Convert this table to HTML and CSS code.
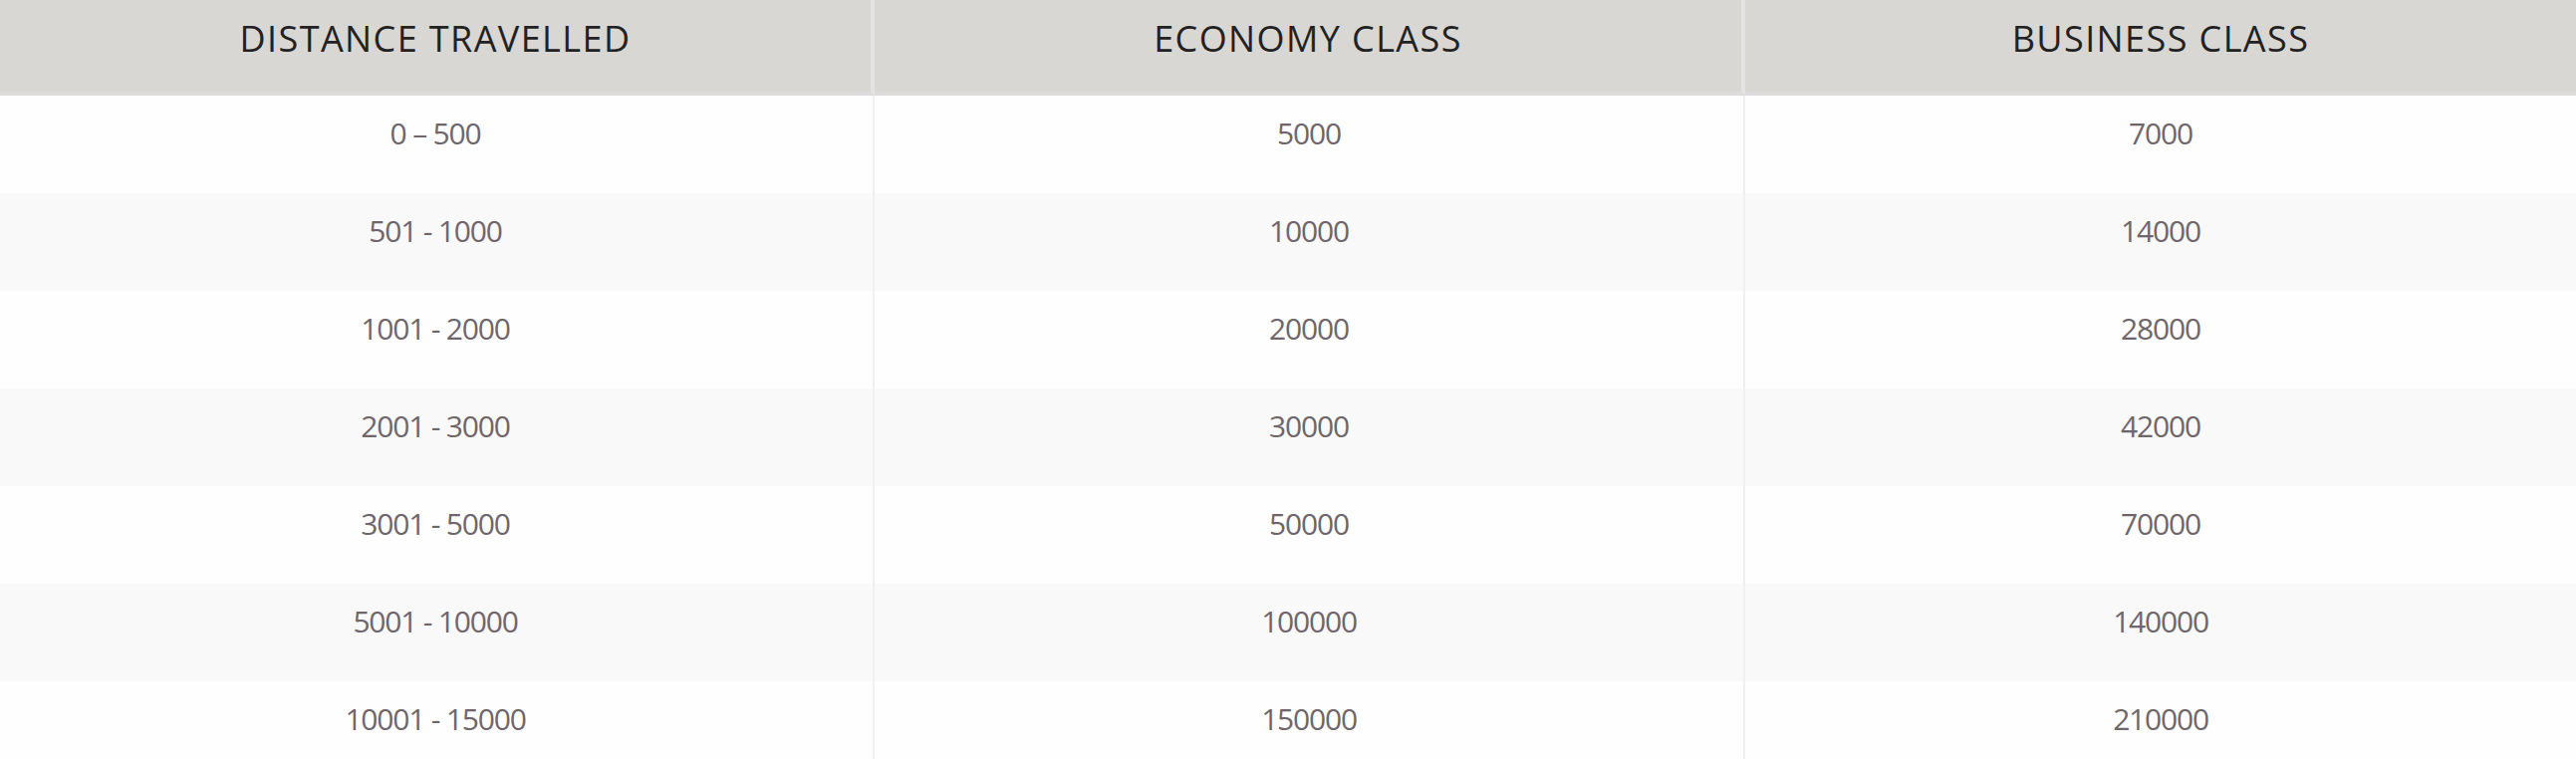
FILE: index.html
```html
<!DOCTYPE html>
<html lang="en">
<head>
<meta charset="utf-8">
<title>Miles table</title>
<link rel="stylesheet" href="styles.css">
</head>
<body>
<table class="miles">
  <colgroup>
    <col class="c1"><col class="c2"><col class="c3">
  </colgroup>
  <thead>
    <tr><th>DISTANCE TRAVELLED</th><th>ECONOMY CLASS</th><th>BUSINESS CLASS</th></tr>
  </thead>
  <tbody>
    <tr><td>0 – 500</td><td>5000</td><td>7000</td></tr>
    <tr><td>501 - 1000</td><td>10000</td><td>14000</td></tr>
    <tr><td>1001 - 2000</td><td>20000</td><td>28000</td></tr>
    <tr><td>2001 - 3000</td><td>30000</td><td>42000</td></tr>
    <tr><td>3001 - 5000</td><td>50000</td><td>70000</td></tr>
    <tr><td>5001 - 10000</td><td>100000</td><td>140000</td></tr>
    <tr><td>10001 - 15000</td><td>150000</td><td>210000</td></tr>
  </tbody>
</table>
</body>
</html>
```
FILE: styles.css
```css
html, body {
  margin: 0;
  padding: 0;
  background: #fefefe;
  overflow: hidden;
}
.miles {
  width: 2586px;
  border-collapse: separate;
  border-spacing: 0;
  table-layout: fixed;
  font-family: "Open Sans", "Noto Sans", sans-serif;
}
.c1 { width: 878px; }
.c2 { width: 874px; }
.c3 { width: 834px; }
.miles th {
  height: 96px;
  box-sizing: border-box;
  padding: 0;
  background: #d8d7d3;
  color: #222222;
  font-size: 36px;
  letter-spacing: 1.4px;
  font-weight: 400;
  text-align: center;
  vertical-align: top;
  line-height: 78px;
  border-right: 4px solid #e4e3e1;
  border-bottom: 4px solid #dddcdb;
}
.miles th:last-child { border-right: 0; }
.miles td {
  height: 98px;
  box-sizing: border-box;
  padding: 0;
  text-align: center;
  vertical-align: top;
  line-height: 75px;
  font-size: 30px;
  letter-spacing: -1.2px;
  color: #6e666b;
  border-right: 2px solid #f0f0f0;
}
.miles td:last-child { border-right: 0; }
.miles tbody tr:nth-child(odd) td { background: #fefefe; }
.miles tbody tr:nth-child(even) td { background: #f9f9f9; }
.miles td:first-child { padding-right: 2px; }
```
